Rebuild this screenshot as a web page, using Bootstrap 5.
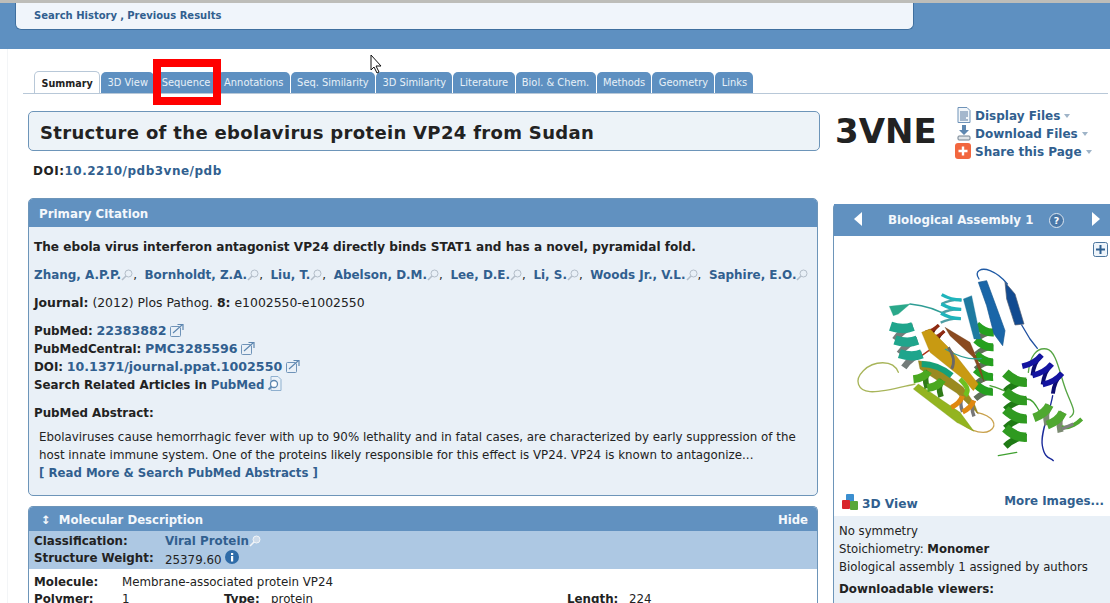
<!DOCTYPE html>
<html lang="en">
<head>
  <meta charset="UTF-8" />
  <title>3VNE</title>
  <link href="https://cdn.jsdelivr.net/npm/bootstrap@5.3.0/dist/css/bootstrap.min.css" rel="stylesheet" />
  <style>
    html, body { height: 603px; overflow: hidden; }
    body {
      font-family: "DejaVu Sans", Verdana, sans-serif;
      font-size: 11.85px;
      line-height: 18px;
      color: #222;
      background: #fff;
      border-top: 3px solid #bdbdb9;
    }
    a { color: #315f8f; font-weight: 700; text-decoration: none; }
    b { font-weight: 700; }
    .topband { background: #5e90c1; height: 46px; padding-left: 15px; }
    .searchbox {
      width: 899px; height: 27px; padding: 4px 18px;
      background: #f0f5fb; border: 1px solid #3f6f9f; border-top: 0;
      border-radius: 0 0 6px 6px; font-size: 10px; line-height: 18px;
    }
    .pagetabs { margin: 23px 2px 0 23px; padding-left: 11px; height: 22px; border-bottom: 1px solid #b8c8d8; gap: 1px; }
    .pagetab {
      height: 21px; padding: 0 6.35px; background: #5e90c1; color: #e8f0f8;
      font-size: 9.9px; font-weight: 400; line-height: 21px;
      border-radius: 5px 5px 0 0; white-space: nowrap;
    }
    .pagetab.on { height: 22px; background: #fff; color: #222; font-size: 9.6px; font-weight: 700; padding: 1px 6.5px; border: 1px solid #b8c8d8; border-bottom: 0; }
    .redmark { position: absolute; left: 153px; top: 59px; width: 68px; height: 46px; border: 8px solid #f00; }
    .pagebody { padding: 17px 0 0 28px; gap: 13px; }
    .leftcol { width: 792px; flex: none; }
    .titlebox {
      height: 40px; padding: 0 11px; background: #edf3f8; border: 1px solid #6d95b9; border-radius: 5px;
      font-size: 18px; font-weight: 700; line-height: 42px; letter-spacing: .32px; white-space: nowrap;
    }
    .doiline { margin: 11px 0 0 5px; font-size: 12px; font-weight: 700; letter-spacing: .5px; }
    .panelbox { width: 790px; border: 1px solid #6d95b9; border-radius: 5px; }
    .citebox { margin-top: 18px; height: 298px; background: #e9f0f7; }
    .panelhead { background: #6191c0; color: #f4f8fc; font-weight: 700; padding: 0 10px; }
    .citebox .panelhead { height: 28px; line-height: 30px; border-radius: 4px 4px 0 0; }
    .citebody { padding: 11px 5px 0; }
    .citebody p { margin: 0 0 10px; white-space: nowrap; }
    .fulltitle { font-size: 12.1px; }
    .authors { font-size: 11.95px; }
    .linkset a { font-size: 12.6px; }
    .linkset a.pubsearch { font-size: 11.8px; }
    .journal { font-size: 12.4px; }
    .abstract { padding: 0 5px; margin-top: -2px; font-size: 11.85px; }
    .abstract a { font-size: 11.75px; }
    .molbox { margin-top: 10px; height: 130px; border-bottom: 0; }
    .molbox .panelhead { height: 24px; line-height: 26px; font-size: 11.7px; border-radius: 4px 4px 0 0; padding: 0 9px 0 12px; }
    .classrow { background: #adc8e3; height: 38px; padding: 2px 5px 0; line-height: 17px; }
    .classrow b, .moltable b { display: inline-block; }
    .weightval { vertical-align: -2px; }
    .lab1 { width: 131px; }
    .moltable { padding: 5px 5px; white-space: nowrap; line-height: 17px; }
    .lab2 { width: 88px; }
    .cellone { width: 102px; }
    .labtype { width: 47px; }
    .celltype { width: 296px; }
    .lablen { width: 62px; }
    .sidecol { flex: 1; min-width: 0; }
    .idrow { height: 93px; padding-left: 2px; }
    .bigid { width: 122px; font-size: 34px; font-weight: 700; line-height: 40px; white-space: nowrap; }
    .filelinks { margin-top: -4px; white-space: nowrap; font-size: 12px; line-height: 18px; }
    .filelinks svg { margin-right: 4px; vertical-align: -3px; }
    .filelinks svg.shareico { margin-left: -2px; }
    .caret { display: inline-block; border: 3px solid transparent; border-top: 4px solid #9fb4c8; border-bottom: 0; margin-left: 4px; vertical-align: 2px; }
    .viewpanel { border-left: 1px solid #6d95b9; border-top-left-radius: 4px; }
    .viewhead { height: 32px; padding: 0; position: relative; }
    .viewhead .asmtitle { margin-left: 54px; width: 161px; line-height: 36px; }
    .helpdot { width: 15px; height: 15px; border-radius: 50%; background: #4a78a8; border: 1px solid #dce6f0; color: #fff; font-size: 9.5px; line-height: 13px; text-align: center; }
    .imgarea { height: 255px; position: relative; }
    .imgarea svg.protein { display: block; }
    .plusbtn { position: absolute; right: 2px; top: 6px; }
    .imgfoot { height: 25px; padding: 0 6px 0 8px; }
    .threed { font-size: 12.2px; margin-top: 3px; }
    .threed svg { margin-right: 4px; vertical-align: -2px; }
    .moreimg { margin-top: 1px; }
    .viewinfo { background: #e9f0f7; padding: 6px 5px; height: 120px; font-size: 11.7px; }
    .viewinfo h6 { font-size: 11.85px; font-weight: 700; line-height: 18px; margin: 4px 0 0; }
    .leftedge { position: absolute; left: 7px; top: 49px; bottom: 0; border-left: 1px solid #f3f5f7; }
    .pointer { position: absolute; left: 370px; top: 55px; }
    .icn { vertical-align: -2px; }
  </style>
</head>
<body>
<svg width="0" height="0" class="position-absolute">
  <symbol id="lens" viewBox="0 0 12 12">
    <circle cx="7.500" cy="4.500" r="3.500" fill="none" stroke="#b4bec9" />
    <path d="M5 7 1 11" stroke="#b4bec9" stroke-width="1.600" />
  </symbol>
  <symbol id="lenslight" viewBox="0 0 12 12">
    <circle cx="7.500" cy="4.500" r="3.500" fill="#cfdcea" stroke="#f2f5f8" />
    <path d="M5 7 1 11" stroke="#f2f5f8" stroke-width="1.600" />
  </symbol>
  <symbol id="ext" viewBox="0 0 14 14">
    <rect x=".5" y="3.500" width="10" height="10" rx="1" fill="none" stroke="#6f93b8" />
    <path d="M3 10 12 2M7.500 1.500H13V7" fill="#eaf1f8" stroke="#5e87b0" stroke-width="1.200" />
  </symbol>
</svg>

<div class="leftedge"></div>
<div class="topband">
  <div class="searchbox"><a href="#">Search History</a> <a href="#">,</a> <a href="#">Previous Results</a></div>
</div>

<svg class="pointer" width="14" height="20" viewBox="0 0 14 20"><path d="M1 0v15l3-3 3 6 2-1-3-6h5z" fill="#fff" stroke="#111" /></svg>

<div class="pagetabs d-flex align-items-end">
  <a class="pagetab on" href="#">Summary</a>
  <a class="pagetab" href="#">3D View</a>
  <a class="pagetab" href="#">Sequence</a>
  <a class="pagetab" href="#">Annotations</a>
  <a class="pagetab" href="#">Seq. Similarity</a>
  <a class="pagetab" href="#">3D Similarity</a>
  <a class="pagetab" href="#">Literature</a>
  <a class="pagetab" href="#">Biol. &amp; Chem.</a>
  <a class="pagetab" href="#">Methods</a>
  <a class="pagetab" href="#">Geometry</a>
  <a class="pagetab" href="#">Links</a>
</div>
<div class="redmark"></div>

<div class="pagebody d-flex">
  <div class="leftcol">
    <div class="titlebox">Structure of the ebolavirus protein VP24 from Sudan</div>
    <div class="doiline">DOI:<a href="#">10.2210/pdb3vne/pdb</a></div>

    <div class="panelbox citebox">
      <div class="panelhead">Primary Citation</div>
      <div class="citebody">
        <p class="fulltitle"><b>The ebola virus interferon antagonist VP24 directly binds STAT1 and has a novel, pyramidal fold.</b></p>
        <p class="authors">
          <a href="#">Zhang, A.P.P.</a><svg class="icn" width="12" height="12"><use href="#lens" /></svg>,&nbsp;
          <a href="#">Bornholdt, Z.A.</a><svg class="icn" width="12" height="12"><use href="#lens" /></svg>,&nbsp;
          <a href="#">Liu, T.</a><svg class="icn" width="12" height="12"><use href="#lens" /></svg>,&nbsp;
          <a href="#">Abelson, D.M.</a><svg class="icn" width="12" height="12"><use href="#lens" /></svg>,&nbsp;
          <a href="#">Lee, D.E.</a><svg class="icn" width="12" height="12"><use href="#lens" /></svg>,&nbsp;
          <a href="#">Li, S.</a><svg class="icn" width="12" height="12"><use href="#lens" /></svg>,&nbsp;
          <a href="#">Woods Jr., V.L.</a><svg class="icn" width="12" height="12"><use href="#lens" /></svg>,&nbsp;
          <a href="#">Saphire, E.O.</a><svg class="icn" width="12" height="12"><use href="#lens" /></svg>
        </p>
        <p class="journal"><b>Journal:</b> (2012) Plos Pathog. <b>8:</b> e1002550-e1002550</p>
        <p class="linkset">
          <b>PubMed:</b> <a href="#">22383882</a> <svg class="icn" width="14" height="14"><use href="#ext" /></svg><br />
          <b>PubMedCentral:</b> <a href="#">PMC3285596</a> <svg class="icn" width="14" height="14"><use href="#ext" /></svg><br />
          <b>DOI:</b> <a href="#">10.1371/journal.ppat.1002550</a> <svg class="icn" width="14" height="14"><use href="#ext" /></svg><br />
          <b>Search Related Articles in</b> <a class="pubsearch" href="#">PubMed</a>
          <svg class="icn" width="14" height="15" viewBox="0 0 14 15"><path d="M3 .5h7l3 3v11H3z" fill="#eaf1f8" stroke="#8fb0cf" /><circle cx="6" cy="8" r="3.500" fill="#fff" stroke="#5e87b0" stroke-width="1.300" /><path d="M3.500 10.500.5 13.500" stroke="#5e87b0" stroke-width="1.800" /></svg>
        </p>
        <p class="mb-2"><b>PubMed Abstract:</b></p>
        <div class="abstract">
          Ebolaviruses cause hemorrhagic fever with up to 90% lethality and in fatal cases, are characterized by early suppression of the host innate immune system. One of the proteins likely responsible for this effect is VP24. VP24 is known to antagonize...<br />
          <a href="#">[ Read More &amp; Search PubMed Abstracts ]</a>
        </div>
      </div>
    </div>

    <div class="panelbox molbox">
      <div class="panelhead d-flex justify-content-between">
        <span><span class="me-1">↕</span> Molecular Description</span>
        <span>Hide</span>
      </div>
      <div class="classrow">
        <b class="lab1">Classification:</b><a href="#">Viral Protein</a><svg class="icn" width="12" height="12"><use href="#lenslight" /></svg><br />
        <b class="lab1">Structure Weight:</b><span class="weightval">25379.60</span>
        <svg class="icn" width="14" height="14" viewBox="0 0 14 14"><circle cx="7" cy="7" r="7" fill="#2f6ca8" /><rect x="6" y="6" width="2.200" height="5.500" fill="#fff" /><rect x="6" y="3" width="2.200" height="2" fill="#fff" /></svg>
      </div>
      <div class="moltable">
        <b class="lab2">Molecule:</b>Membrane-associated protein VP24
        <div class="d-flex">
          <b class="lab2">Polymer:</b><span class="cellone">1</span>
          <b class="labtype">Type:</b><span class="celltype">protein</span>
          <b class="lablen">Length:</b><span>224</span>
        </div>
      </div>
    </div>
  </div>

  <div class="sidecol">
    <div class="idrow d-flex">
      <div class="bigid">3VNE</div>
      <div class="filelinks">
        <div><svg width="14" height="16" viewBox="0 0 14 16"><path d="M1 .5h9l3 3v12H1z" fill="#f2f6fa" stroke="#6f93b8" /><path d="M3 5h8M3 7h8M3 9h8M3 11h6M3 13h8" stroke="#5678a0" /></svg><a href="#">Display Files</a><span class="caret"></span></div>
        <div><svg width="14" height="16" viewBox="0 0 14 16"><path d="M5 0h4v5h3L7 10 2 5h3z" fill="#5e87b0" /><rect x="1" y="11" width="12" height="4" rx="1" fill="#dfe4e8" stroke="#70808f" /></svg><a href="#">Download Files</a><span class="caret"></span></div>
        <div><svg width="16" height="16" viewBox="0 0 16 16" class="shareico"><rect width="16" height="16" rx="3" fill="#f2673f" /><path d="M8 3.500v9M3.500 8h9" stroke="#fff" stroke-width="2.400" /></svg><a href="#">Share this Page</a><span class="caret"></span></div>
      </div>
    </div>

    <div class="viewpanel">
      <div class="panelhead viewhead d-flex align-items-center">
        <svg class="position-absolute navprev" width="8" height="14" viewBox="0 0 8 14" style="left:20px;top:8px"><path d="M8 0v14L0 7z" fill="#fff" /></svg>
        <span class="asmtitle">Biological Assembly 1</span>
        <span class="helpdot">?</span>
        <svg class="position-absolute navnext" width="8" height="14" viewBox="0 0 8 14" style="left:258px;top:8px"><path d="M0 0v14l8-7z" fill="#fff" /></svg>
      </div>

      <div class="imgarea">
        <svg class="plusbtn" width="15" height="15" viewBox="0 0 15 15"><rect x=".5" y=".5" width="14" height="14" rx="2" fill="#eef4fa" stroke="#4d769e" /><path d="M7.500 3v9M3 7.500h9" stroke="#2f5f8f" stroke-width="2" /></svg>
        <svg class="protein" width="276" height="255" viewBox="12 111 828 765" fill="none" stroke-linejoin="round">
          <!-- thin loops -->
          <g stroke-width="4" stroke-linecap="round">
            <path d="M205 520C190 480 130 485 100 515S85 575 120 578 210 565 255 555" stroke="#a8b55a" />
            <path d="M440 640C490 650 505 680 480 695S400 690 375 650" stroke="#c9a24e" />
            <path d="M447 240C430 215 455 205 480 215S520 240 532 255" stroke="#1f5aa5" />
            <path d="M575 378 600 420 622 448" stroke="#2050a0" />
            <path d="M595 520C600 470 620 445 650 450S690 530 710 580 740 640 720 655" stroke="#57a545" />
            <path d="M668 590C660 640 630 700 637 740S660 775 670 785" stroke="#1a2a9a" />
            <path d="M240 315C290 320 330 335 360 355" stroke="#2f9d95" />
            <path d="M505 770 560 760" stroke="#3fa030" />
            <path d="M590 600C620 600 625 650 650 660" stroke="#3fa030" />
            <path d="M480 560C500 565 520 575 535 580" stroke="#4aa035" />
            <path d="M275 470 310 445" stroke="#b03018" />
          </g>
          <g id="helixback"></g>

          <!-- sheets -->
          <path d="M400 300 425 290 452 420 432 420z" fill="#1e7aa0" stroke="#1e7aa0" />
          <path d="M445 250 470 245 505 340 525 395 518 440 492 405 470 320z" fill="#1a66a8" stroke="#14568f" stroke-width="2" />
          <path d="M525 250 555 285 582 375 555 378 530 300z" fill="#124a90" stroke="#555e70" stroke-width="2" />
          <path d="M345 385 420 430 450 500 462 548 430 475 360 410z" fill="#8a4a20" stroke="#70401c" />
          <path d="M275 400 300 390 370 460 445 555 430 575 400 540 300 460z" fill="#c89a12" stroke="#a88410" />
          <path d="M265 485 300 490 400 565 432 612 445 645 380 582 270 510z" fill="#9a8a20" stroke="#807418" />
          <path d="M250 570 265 555 390 640 432 697 380 670z" fill="#93b420" stroke="#7a9a1a" />
          <path d="M178 322 240 315 205 345 190 350z" fill="#2aa88a" stroke="#2aa88a" />
          <path d="M345 450C380 470 420 485 455 478" stroke="#2f9d95" stroke-width="4" />
          <path d="M275 495C310 495 335 505 365 530" stroke="#15a078" stroke-width="18" />
          <path d="M355 445C370 465 375 490 365 510" stroke="#686868" stroke-width="9" />
          <path d="M390 540C410 560 420 575 405 590" stroke="#6fc020" stroke-width="14" />

          <g id="helixfront"></g>
          <path d="M695 685C720 690 745 670 755 660" stroke="#4fa830" stroke-width="12" />
          <path d="M695 690 730 675" stroke="#808080" stroke-width="9" />
        </svg>
      </div>

      <div class="imgfoot d-flex justify-content-between">
        <a class="threed" href="#"><svg width="16" height="16" viewBox="0 0 16 16"><rect x="4" y="0" width="8" height="9" rx="1" fill="#3b8fd0" /><rect x="0" y="6" width="8" height="9" rx="1" fill="#d8262c" /><rect x="8" y="7" width="8" height="9" rx="1" fill="#58a83a" /></svg>3D View</a>
        <a class="moreimg" href="#">More Images...</a>
      </div>

      <div class="viewinfo">
        No symmetry<br />
        Stoichiometry: <b>Monomer</b><br />
        Biological assembly 1 assigned by authors
        <h6>Downloadable viewers:</h6>
      </div>
    </div>
  </div>
</div>

<script>
  // ribbon coils for the protein picture: coloured front bands, darker back bands
  const svgNS = "http://www.w3.org/2000/svg";

  function desenharHelice(grupo, ax, ay, bx, by, raio, voltas, largura, cor, corFundo) {
    const g = document.getElementById(grupo);
    const dx = bx - ax, dy = by - ay;
    const len = Math.hypot(dx, dy);
    const px = -dy / len * raio, py = dx / len * raio;
    const ponto = (t, lado) => [ax + dx * t / voltas + px * lado, ay + dy * t / voltas + py * lado];

    const faixa = (t, ladoIni, cs, w, bojo) => {
      const [x1, y1] = ponto(t, ladoIni);
      const [x2, y2] = ponto(t + 0.5, -ladoIni);
      const [cx, cy] = ponto(t + 0.25 + bojo, 0);
      const p = document.createElementNS(svgNS, "path");
      p.setAttribute("d", `M${x1} ${y1}Q${cx} ${cy} ${x2} ${y2}`);
      p.setAttribute("stroke", cs);
      p.setAttribute("stroke-width", w);
      g.appendChild(p);
    };

    // back bands bow up, front bands bow down, so each turn reads as a loop
    for (let t = 0; t < voltas; t += 1) faixa(t + 0.5, -1, corFundo, largura * 0.7, -0.3);
    for (let t = 0; t < voltas; t += 1) faixa(t, 1, cor, largura, 0.3);
  }

  desenharHelice("helixback", 365, 288, 362, 372, 30, 3, 10, "#1fb4bb", "#4f9fa4");
  desenharHelice("helixback", 465, 378, 462, 600, 26, 5, 24, "#25a01f", "#5f6f5a");
  desenharHelice("helixback", 302, 385, 335, 420, 22, 2, 10, "#8f2a12", "#5a1a0a");

  desenharHelice("helixfront", 212, 372, 252, 495, 32, 3, 28, "#1fa58c", "#747c7a");
  desenharHelice("helixfront", 262, 522, 345, 575, 22, 2, 24, "#4aa820", "#2f7a18");
  desenharHelice("helixfront", 372, 605, 440, 632, 22, 2, 15, "#e08810", "#777777");
  desenharHelice("helixfront", 558, 522, 558, 742, 32, 4, 28, "#2f9a20", "#1f7a15");
  desenharHelice("helixfront", 598, 478, 690, 560, 32, 3, 17, "#1414a0", "#0c0c70");
  desenharHelice("helixfront", 625, 632, 705, 675, 28, 2, 26, "#4fa830", "#7a8a70");
</script>
</body>
</html>
